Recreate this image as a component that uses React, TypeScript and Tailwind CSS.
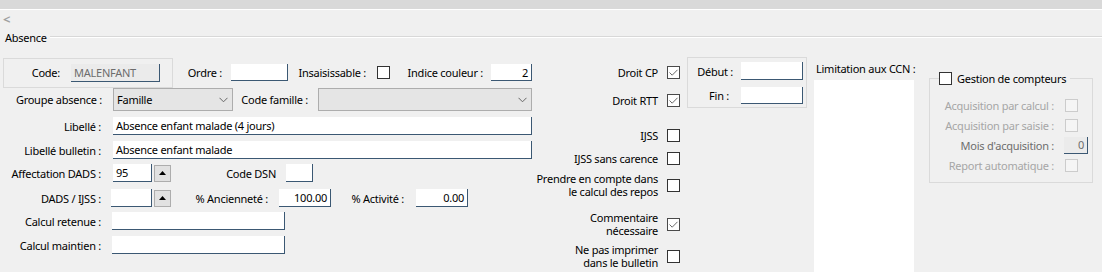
import React from "react";

const Field = ({ cls, value = "", right = false, gray = false }: { cls: string; value?: string; right?: boolean; gray?: boolean }) => (
  <div
    className={`${cls} flex items-center px-[3px] border-r border-b border-[#3b5873] whitespace-nowrap overflow-hidden ${
      gray ? "bg-[#ebebeb] text-[#6d6d6d]" : "bg-white text-black"
    } ${right ? "justify-end" : "justify-start"}`}
  >
    {value}
  </div>
);

const Check = ({ checked = false, disabled = false }: { checked?: boolean; disabled?: boolean }) => (
  <div
    className={`w-[13px] h-[13px] shrink-0 border flex items-center justify-center ${
      disabled ? "border-[#cccccc] bg-[#f5f5f5]" : checked ? "border-[#4a4a4a] bg-white" : "border-[#333333] bg-white"
    }`}
  >
    {checked && (
      <svg width="11" height="11" viewBox="0 0 11 11">
        <path d="M1.5 5.5 L4.2 8.2 L9.5 2.8" fill="none" stroke="#6a6a6a" strokeWidth="1" />
      </svg>
    )}
  </div>
);

const Select = ({ cls, value = "" }: { cls: string; value?: string }) => (
  <div className={`${cls} h-[23px] bg-[#e5e5e5] border border-[#adadad] flex items-center justify-between pl-[3px] pr-[4px]`}>
    <span>{value}</span>
    <svg width="9" height="6" viewBox="0 0 9 6">
      <path d="M0.5 0.8 L4.5 4.8 L8.5 0.8" fill="none" stroke="#666666" strokeWidth="1" />
    </svg>
  </div>
);

const Spin = () => (
  <div className="ml-[2px] w-[17px] h-[17px] bg-[#e1e1e1] border border-[#adadad] flex items-center justify-center">
    <svg width="7" height="4" viewBox="0 0 7 4">
      <polygon points="3.5,0 7,4 0,4" fill="#000000" />
    </svg>
  </div>
);

const Label = ({ cls, children }: { cls: string; children: React.ReactNode }) => (
  <div className={`${cls} shrink-0 text-right whitespace-nowrap`}>{children}</div>
);

const CheckRow = ({ cls, lines, checked = false }: { cls: string; lines: string[]; checked?: boolean }) => (
  <div className={`${cls} flex items-center justify-end gap-[9px]`}>
    <div className="text-right leading-[13px] whitespace-nowrap">
      {lines.map((l) => (
        <div key={l}>{l}</div>
      ))}
    </div>
    <Check checked={checked} />
  </div>
);

export default function App() {
  return (
    <div className="w-[1102px] h-[272px] overflow-hidden bg-[#f0f0f0] text-black text-[11px] leading-[15px] tracking-[-0.25px] font-['Noto_Sans',sans-serif]">
      <div className="h-[10px] bg-[#d9d9d9] border-b border-white" />
      <div className="h-[14px] pl-[3px] pt-[2px] text-[#a0a0a0] text-[13px] leading-[14px] font-bold">&lt;</div>
      <div className="h-[26px] flex items-center">
        <span className="pl-[5px] pr-[3px]">Absence</span>
        <div className="flex-1 border-t border-[#d8d8d8] border-b border-b-white" />
      </div>

      <div className="flex h-[222px] pt-[7px]">
        {/* Left column */}
        <div className="w-[540px] shrink-0 flex flex-col">
          <div className="h-[31px] flex items-center">
            <div className="ml-[3px] w-[170px] h-[30px] border border-[#dadada] flex items-center">
              <Label cls="w-[56px]">Code:</Label>
              <Field cls="ml-[11px] w-[89px] h-[18px]" value="MALENFANT" gray />
            </div>
            <Label cls="w-[49px]">Ordre :</Label>
            <Field cls="ml-[9px] w-[57px] h-[17px]" />
            <Label cls="w-[78px]">Insaisissable :</Label>
            <div className="ml-[11px]">
              <Check />
            </div>
            <Label cls="w-[93px]">Indice couleur :</Label>
            <Field cls="ml-[8px] w-[41px] h-[17px]" value="2" right />
          </div>

          <div className="h-[23px] flex items-center">
            <Label cls="w-[102px]">Groupe absence :</Label>
            <Select cls="ml-[11px] w-[120px]" value="Famille" />
            <Label cls="w-[75px]">Code famille :</Label>
            <Select cls="ml-[10px] w-[214px]" />
          </div>

          <div className="mt-[6px] h-[18px] flex items-center">
            <Label cls="w-[101px]">Libellé :</Label>
            <Field cls="ml-[12px] w-[419px] h-[18px]" value="Absence enfant malade (4 jours)" />
          </div>

          <div className="mt-[6px] h-[18px] flex items-center">
            <Label cls="w-[101px]">Libellé bulletin :</Label>
            <Field cls="ml-[12px] w-[419px] h-[18px]" value="Absence enfant malade" />
          </div>

          <div className="mt-[5px] h-[18px] flex items-center">
            <Label cls="w-[101px]">Affectation DADS :</Label>
            <Field cls="ml-[12px] w-[39px] h-[18px]" value="95" />
            <Spin />
            <Label cls="w-[105px]">Code DSN</Label>
            <Field cls="ml-[10px] w-[27px] h-[18px]" />
          </div>

          <div className="mt-[7px] h-[18px] flex items-center">
            <Label cls="w-[101px]">DADS / IJSS :</Label>
            <Field cls="ml-[10px] w-[41px] h-[18px]" />
            <Spin />
            <Label cls="w-[97px]">% Ancienneté :</Label>
            <Field cls="ml-[11px] w-[52px] h-[18px]" value="100.00" right />
            <Label cls="w-[73px]">% Activité :</Label>
            <Field cls="ml-[12px] w-[52px] h-[18px]" value="0.00" right />
          </div>

          <div className="mt-[5px] h-[18px] flex items-center">
            <Label cls="w-[101px]">Calcul retenue :</Label>
            <Field cls="ml-[11px] w-[173px] h-[18px]" />
          </div>

          <div className="mt-[6px] h-[18px] flex items-center">
            <Label cls="w-[101px]">Calcul maintien :</Label>
            <Field cls="ml-[11px] w-[173px] h-[18px]" />
          </div>
        </div>

        {/* Checkbox column */}
        <div className="w-[140px] shrink-0 flex flex-col">
          <CheckRow cls="mt-[7px] h-[16px]" lines={["Droit CP"]} checked />
          <CheckRow cls="mt-[12px] h-[16px]" lines={["Droit RTT"]} checked />
          <CheckRow cls="mt-[19px] h-[16px]" lines={["IJSS"]} />
          <CheckRow cls="mt-[7px] h-[16px]" lines={["IJSS sans carence"]} />
          <CheckRow cls="mt-[6px] h-[26px]" lines={["Prendre en compte dans", "le calcul des repos"]} />
          <CheckRow cls="mt-[13px] h-[26px]" lines={["Commentaire", "nécessaire"]} checked />
          <CheckRow cls="mt-[6px] h-[26px]" lines={["Ne pas imprimer", "dans le bulletin"]} />
        </div>

        {/* Début / Fin */}
        <div className="ml-[7px] w-[120px] h-[51px] shrink-0 border border-[#dadada] flex flex-col">
          <div className="mt-[4px] h-[18px] flex items-center">
            <Label cls="w-[45px]">Début :</Label>
            <Field cls="ml-[8px] w-[62px] h-[18px]" />
          </div>
          <div className="mt-[7px] h-[17px] flex items-center">
            <Label cls="w-[41px]">Fin :</Label>
            <Field cls="ml-[12px] w-[62px] h-[17px]" />
          </div>
        </div>

        {/* Limitation aux CCN */}
        <div className="ml-[7px] w-[100px] shrink-0 flex flex-col">
          <div className="h-[23px] pt-[4px] pl-[2px] whitespace-nowrap">Limitation aux CCN :</div>
          <div className="flex-1 bg-white" />
        </div>

        {/* Gestion de compteurs */}
        <div className="ml-[15px] mt-[21px] w-[164px] h-[105px] shrink-0 border border-[#dadada] flex flex-col">
          <div className="-mt-[9px] ml-[9px] h-[17px] w-fit pr-[4px] bg-[#f0f0f0] flex items-center gap-[5px] whitespace-nowrap">
            <Check />
            <span>Gestion de compteurs</span>
          </div>
          <div className="pt-[8px] flex flex-col text-[#a6a6a6]">
            <div className="h-[20px] flex items-center">
              <Label cls="w-[124px]">Acquisition par calcul :</Label>
              <div className="ml-[11px]">
                <Check disabled />
              </div>
            </div>
            <div className="h-[20px] flex items-center">
              <Label cls="w-[124px]">Acquisition par saisie :</Label>
              <div className="ml-[11px]">
                <Check disabled />
              </div>
            </div>
            <div className="h-[20px] flex items-center">
              <Label cls="w-[124px] text-[#6d6d6d]">Mois d'acquisition :</Label>
              <Field cls="ml-[10px] w-[24px] h-[17px]" value="0" right gray />
            </div>
            <div className="h-[20px] flex items-center">
              <Label cls="w-[124px]">Report automatique :</Label>
              <div className="ml-[11px]">
                <Check disabled />
              </div>
            </div>
          </div>
        </div>
      </div>
    </div>
  );
}
